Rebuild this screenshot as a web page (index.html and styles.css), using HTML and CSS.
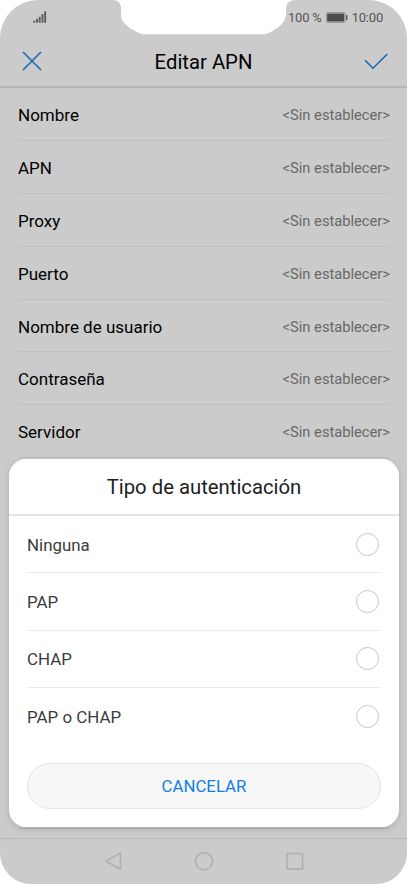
FILE: index.html
```
<!DOCTYPE html>
<html lang="es">
<head>
    <meta charset="UTF-8">
    <meta name="viewport" content="width=device-width, initial-scale=1.0">
    <title>Editar APN</title>
    <link rel="stylesheet" href="styles.css">
</head>
<body>
    <div class="phone">
        <svg class="notch" width="168" height="35" viewBox="0 0 168 35">
            <path d="M-8 0H176C168 0 166 4 166 11V15C165 24 155 31 145 34.300H22C11 30 1 23 1 15V9C1 3 -2 0 -8 0Z" fill="#fff"/>
        </svg>

        <div class="status-bar">
            <svg class="signal" width="14" height="13" viewBox="0 0 14 13">
                <path d="M1.200 9.700V11.700M4 7.700V11.700M6.700 5.700V11.700M9.500 3V11.700M12.200 0.300V11.700" stroke="#5c5c5c" stroke-width="1.900" fill="none"/>
            </svg>
            <div class="status-right">
                <span class="percent">100 %</span>
                <svg width="22" height="12" viewBox="0 0 22 12">
                    <rect x="0.500" y="0.500" width="18.500" height="10" rx="1" fill="none" stroke="#999"/>
                    <rect x="1.200" y="1.500" width="17" height="8" fill="#4c4c4c"/>
                    <path d="M20.700 3V8" stroke="#555" stroke-width="1.400"/>
                </svg>
                <span class="clock">10:00</span>
            </div>
        </div>

        <div class="title-bar">
            <svg width="20" height="20" viewBox="0 0 20 20">
                <path d="M1 1L19 19M19 1L1 19" stroke="#1a69b8" stroke-width="1.600" fill="none"/>
            </svg>
            <h1>Editar APN</h1>
            <svg width="24" height="18" viewBox="0 0 24 18">
                <path d="M1 8.200L9 16.200L23.300 2" stroke="#1a69b8" stroke-width="1.600" fill="none"/>
            </svg>
        </div>

        <div class="settings">
            <div class="row"><span>Nombre</span><span class="value">&lt;Sin establecer&gt;</span></div>
            <div class="row"><span>APN</span><span class="value">&lt;Sin establecer&gt;</span></div>
            <div class="row"><span>Proxy</span><span class="value">&lt;Sin establecer&gt;</span></div>
            <div class="row"><span>Puerto</span><span class="value">&lt;Sin establecer&gt;</span></div>
            <div class="row"><span>Nombre de usuario</span><span class="value">&lt;Sin establecer&gt;</span></div>
            <div class="row"><span>Contraseña</span><span class="value">&lt;Sin establecer&gt;</span></div>
            <div class="row"><span>Servidor</span><span class="value">&lt;Sin establecer&gt;</span></div>
        </div>

        <div class="nav-bar">
            <svg width="18" height="20" viewBox="0 0 18 20">
                <path d="M16.500 1.300V17.300L1.700 9Z" fill="none" stroke="#b0b0b0" stroke-width="1.700" stroke-linejoin="round"/>
            </svg>
            <svg width="20" height="20" viewBox="0 0 20 20">
                <circle cx="10" cy="9.200" r="8.500" fill="none" stroke="#b0b0b0" stroke-width="1.600"/>
            </svg>
            <svg width="18" height="20" viewBox="0 0 18 20">
                <rect x="1" y="1.500" width="15.600" height="15.600" rx="0.500" fill="none" stroke="#b0b0b0" stroke-width="1.600"/>
            </svg>
        </div>

        <div class="dialog">
            <h2>Tipo de autenticación</h2>
            <div class="options">
                <div class="option"><span>Ninguna</span><i class="radio"></i></div>
                <div class="option"><span>PAP</span><i class="radio"></i></div>
                <div class="option"><span>CHAP</span><i class="radio"></i></div>
                <div class="option"><span>PAP o CHAP</span><i class="radio"></i></div>
            </div>
            <button class="cancel">CANCELAR</button>
        </div>
    </div>
</body>
</html>
```
FILE: styles.css
```
* {
    box-sizing: border-box;
}
body {
    margin: 0;
    background-color: #fff;
    font-family: Roboto, sans-serif;
    overflow: hidden;
}
svg {
    display: block;
    flex-shrink: 0;
}
.phone {
    position: relative;
    display: flex;
    flex-direction: column;
    width: 407px;
    height: 884px;
    background-color: #cbcbcb;
    border-radius: 38px 38px 31px 31px;
    overflow: hidden;
}
.notch {
    position: absolute;
    top: 0;
    left: 120px;
    overflow: visible;
}
.status-bar {
    display: flex;
    justify-content: space-between;
    height: 35px;
    padding: 11px 24px 0 33px;
    color: #555;
    font-size: 13px;
    line-height: 13px;
}
.status-right {
    display: flex;
    align-items: center;
    gap: 4px;
    height: 13px;
    letter-spacing: -0.2px;
}
.title-bar {
    display: flex;
    align-items: center;
    justify-content: space-between;
    height: 53px;
    padding: 0 19px 0 22px;
    border-bottom: 2px solid #b5b5b5;
}
.title-bar h1 {
    margin: 0;
    padding: 3px 0 0 1px;
    color: #000;
    font-size: 20.3px;
    font-weight: 400;
    line-height: 48px;
}
.settings {
    flex: 1;
    margin: 0 17px 9px 18px;
    border-bottom: 1px solid #b8b8b8;
}
.row {
    display: flex;
    align-items: center;
    justify-content: space-between;
    height: 52.9px;
    padding-top: 2px;
    border-bottom: 1px solid #bfbfbf;
    color: #000;
    font-size: 17px;
}
.value {
    color: #686868;
    font-size: 14.7px;
}
.nav-bar {
    display: flex;
    align-items: center;
    justify-content: center;
    gap: 72px;
    height: 46px;
    border-top: 1px solid #b8b8b8;
}
.dialog {
    position: absolute;
    top: 459px;
    left: 9px;
    display: flex;
    flex-direction: column;
    width: 390px;
    height: 368px;
    background-color: #fff;
    border-radius: 17px;
    box-shadow: 0 2px 6px rgba(0, 0, 0, 0.15);
}
.dialog h2 {
    height: 57px;
    margin: 0;
    border-bottom: 2px solid #e4e4e4;
    color: #1e1e1e;
    font-size: 20.3px;
    font-weight: 400;
    line-height: 57px;
    text-align: center;
}
.options {
    padding: 0 18px;
}
.option {
    display: flex;
    align-items: center;
    justify-content: space-between;
    height: 57.4px;
    padding: 1px 2px 0 0;
    border-bottom: 1px solid #ececec;
    color: #3c3c3c;
    font-size: 16.9px;
}
.option:last-child {
    border-bottom: none;
}
.radio {
    width: 23px;
    height: 23px;
    margin-top: -1px;
    border: 1px solid #c6c6c6;
    border-radius: 50%;
}
.cancel {
    height: 46px;
    margin: 17px 18px 0;
    padding: 0;
    background-color: #f7f7f7;
    border: 1px solid #e2e2e2;
    border-radius: 23px;
    color: #117eea;
    font-family: inherit;
    font-size: 16.8px;
}
```
